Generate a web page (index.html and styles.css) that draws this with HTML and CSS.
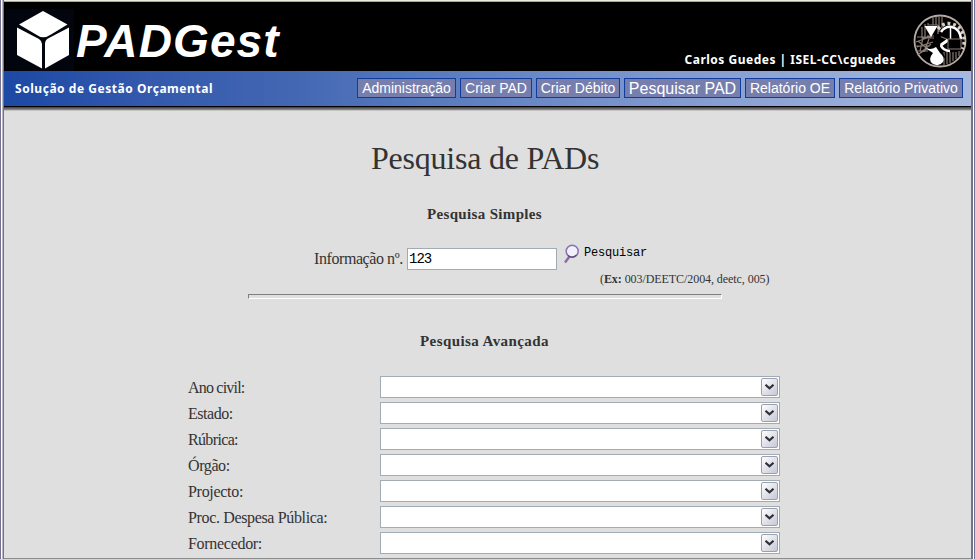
FILE: index.html
```html
<!DOCTYPE html>
<html lang="pt">
<head>
<meta charset="utf-8">
<title>PADGest</title>
<link rel="stylesheet" href="styles.css">
</head>
<body>
<div class="window">
  <header class="banner">
    <svg class="cube" width="68" height="62" viewBox="0 0 68 62">
      <rect width="68" height="62" fill="#02050d"/>
      <path fill="#fff" d="M37 2 61.500 15.500 45 25.500Q37 31 30 25.500L13 15.500ZM11 18.500 33 30Q36 32 36 35V59.500L11 46ZM63 18.500V46L39 59.500V35Q39 31 42 29.500Z"/>
    </svg>
    <span class="brand">PADGest</span>
    <span class="user">Carlos Guedes | ISEL-CC\cguedes</span>
    <svg class="seal" width="54" height="54" viewBox="0 0 54 54" fill="none">
      <circle cx="27" cy="27" r="25.500" stroke="#b5aaa2" stroke-width="1.800"/>
      <path stroke="#887a72" stroke-width="1.200" d="M20 4V11M23 3V11M26 3V18M29 3V14M12 10V24M9 13V24H22M15 9V11H25M25 11V22H14M4 23H18M3 28 19 22M4 33 20 28M7 39 18 30M5 27 16 36M10 24 7 37M16 25 11 38M2 32H17M3 37H15M4 41 14 35M26 22 36 26M31 38V51M34 38V50M37 38V49M40 38V47M43 38V45M46 37V42"/>
      <path stroke="#fff" stroke-width="2.500" d="M28 18Q32 12 39 13Q47 15 48 25M27 30Q30 37 37 37"/>
      <path stroke="#d8cec5" stroke-width="3.500" stroke-dasharray="2.800 2.800" d="M25 15Q31 8 39 10T50 20T49 35"/>
      <path stroke="#fff" stroke-width="1.500" d="M37.500 13V25"/>
      <path stroke="#fff" stroke-width="3" d="M28 31 35 26"/>
      <path fill="#000" stroke="#887a72" d="M35 25H48V35H35Z"/>
      <path fill="#000" d="M21 20H28L27 33 33 45 21 36Z"/>
      <path fill="#fff" d="M11.500 12H24.500L18 23ZM11 33Q17 37 23 33L27 39Q32 43 30 48Q26 53 20 50Q14 46 20 39Z"/>
    </svg>
  </header>
  <nav class="bar">
    <span class="slogan">Solução de Gestão Orçamental</span>
    <div class="menu">
      <a class="item w-adm">Administração</a>
      <a class="item w-pad">Criar PAD</a>
      <a class="item w-deb">Criar Débito</a>
      <a class="item w-search">Pesquisar PAD</a>
      <a class="item w-oe">Relatório OE</a>
      <a class="item w-priv">Relatório Privativo</a>
    </div>
  </nav>
  <div class="shadow"></div>
  <main class="content">
    <h1>Pesquisa de PADs</h1>
    <h2 class="simple-title">Pesquisa Simples</h2>
    <div class="search">
      <label class="info" for="info">Informação nº.</label>
      <input id="info" class="field" value="123">
      <svg class="lens" width="18" height="21" viewBox="0 0 18 21" fill="none">
        <path d="M5.500 12.500 1 18.500" stroke="#8a6aa6" stroke-width="2.400"/>
        <circle cx="8.200" cy="7.300" r="6" fill="#f0effa" stroke="#8971ad" stroke-width="1.500"/>
        <path d="M4 11.500Q8 15 12.500 11" stroke="#5e477d" stroke-width="1.200"/>
      </svg>
      <span class="go">Pesquisar</span>
    </div>
    <p class="hint">(<b>Ex:</b> 003/DEETC/2004, deetc, 005)</p>
    <div class="rule"></div>
    <h2 class="adv-title">Pesquisa Avançada</h2>
    <div class="filters">
      <div class="row"><span class="l1">Ano civil:</span><div class="select"><i class="drop"><svg width="9" height="6" viewBox="0 0 9 6"><path d="M.5 .8 4.500 4.300 8.500 .8"/></svg></i></div></div>
      <div class="row"><span class="l2">Estado:</span><div class="select"><i class="drop"><svg width="9" height="6" viewBox="0 0 9 6"><path d="M.5 .8 4.500 4.300 8.500 .8"/></svg></i></div></div>
      <div class="row"><span class="l3">Rúbrica:</span><div class="select"><i class="drop"><svg width="9" height="6" viewBox="0 0 9 6"><path d="M.5 .8 4.500 4.300 8.500 .8"/></svg></i></div></div>
      <div class="row"><span class="l4">Órgão:</span><div class="select"><i class="drop"><svg width="9" height="6" viewBox="0 0 9 6"><path d="M.5 .8 4.500 4.300 8.500 .8"/></svg></i></div></div>
      <div class="row"><span class="l5">Projecto:</span><div class="select"><i class="drop"><svg width="9" height="6" viewBox="0 0 9 6"><path d="M.5 .8 4.500 4.300 8.500 .8"/></svg></i></div></div>
      <div class="row"><span class="l6">Proc. Despesa Pública:</span><div class="select"><i class="drop"><svg width="9" height="6" viewBox="0 0 9 6"><path d="M.5 .8 4.500 4.300 8.500 .8"/></svg></i></div></div>
      <div class="row"><span class="l7">Fornecedor:</span><div class="select"><i class="drop"><svg width="9" height="6" viewBox="0 0 9 6"><path d="M.5 .8 4.500 4.300 8.500 .8"/></svg></i></div></div>
    </div>
  </main>
</div>
</body>
</html>
```
FILE: styles.css
```css
* { box-sizing: border-box; }
body {
  margin: 0;
  height: 559px;
  overflow: hidden;
  background: linear-gradient(90deg, #737391 0 1px, #fff 1px 2px, #b9b6c5 2px 3px, #737391 3px 4px, #dfdfdf 4px 971px, #737391 971px 973px, #fff 973px 974px, #737391 974px);
}
.window {
  width: 967px;
  height: 559px;
  margin-left: 4px;
  border-top: 1px solid #eceadb;
  border-bottom: 1px solid #8b8b8b;
  overflow: hidden;
  background: #dfdfdf;
  color: #333;
  font-family: "Liberation Serif", serif;
}
.banner {
  height: 70px;
  border-top: 1px solid #aaa89e;
  background: #000;
  display: flex;
  align-items: flex-start;
  color: #fff;
}
.cube { margin: 7px 0 0 2px; flex: none; }
.brand {
  margin: 12px 0 0 2px;
  width: 206px;
  font: italic bold 46px/54px "Liberation Sans", sans-serif;
  letter-spacing: 1.1px;
  white-space: nowrap;
}
.user {
  margin: 49px 0 0 auto;
  font: bold 12px/17px "Noto Sans", sans-serif;
  letter-spacing: .5px;
  white-space: nowrap;
}
.seal { margin: 12px 4px 0 17px; flex: none; }
.bar {
  height: 35px;
  background: linear-gradient(90deg, #1c49a4, #3459ad 15%, #4467b3 30%, #5478bd 42%, #829bd0 70%, #a7b9de);
  display: flex;
  justify-content: space-between;
}
.slogan {
  margin: 9px 0 0 11px;
  color: #fff;
  font: bold 12px/17px "Noto Sans", sans-serif;
  letter-spacing: .54px;
}
.menu { display: flex; gap: 4px; margin: 7px 8px 0 0; }
.item {
  height: 20px;
  border: 1px solid #123c9b;
  background: #767eae;
  color: #fff;
  font: 14px/19px "Liberation Sans", sans-serif;
  text-align: center;
  white-space: nowrap;
}
.w-adm { width: 99px; }
.w-pad { width: 72px; }
.w-deb { width: 84px; }
.w-search { width: 117px; font-size: 16px; line-height: 20px; }
.w-oe { width: 90px; }
.w-priv { width: 124px; }
.shadow {
  height: 5px;
  background: linear-gradient(#000 0 1px, #4b4b4b 1px 2px, #686868 2px 3px, #858585 3px 4px, #c3c3c3 4px);
}
h1, h2, p { margin: 0; white-space: nowrap; }
h1 {
  margin: 28px 0 0 367px;
  font-size: 32px;
  line-height: 38px;
  font-weight: 400;
  letter-spacing: -.22px;
}
h2 { font-size: 15px; line-height: 20px; }
.simple-title { margin: 27px 0 0 423px; letter-spacing: .34px; }
.search { display: flex; margin: 20px 0 0 309px; height: 26px; }
.info { width: 94px; margin-top: 5px; padding-left: 1px; font-size: 16px; line-height: 20px; letter-spacing: -.42px; white-space: nowrap; }
.field {
  width: 150px;
  height: 22px;
  margin-top: 4px;
  border: 1px solid #a1abb4;
  padding: 0 1px 1px;
  background: #fff;
  color: #000;
  font: 14px "Liberation Mono", monospace;
  letter-spacing: -1px;
}
.lens { margin: 0 0 0 7px; }
.go { margin: 0 0 0 2px; color: #000; font: 12px/18px "Liberation Mono", monospace; letter-spacing: -.2px; }
.hint { margin: 1px 0 0 596px; font-size: 12px; line-height: 16px; letter-spacing: -.07px; }
.rule {
  width: 474px;
  height: 5px;
  margin: 7px 0 0 244px;
  border: 1px solid;
  border-color: #7f7f7f #fff #fff #7f7f7f;
}
.adv-title { margin: 32px 0 0 416px; letter-spacing: .42px; }
.filters { display: grid; gap: 4px; margin: 25px 0 0 184px; width: 592px; }
.row { display: flex; justify-content: space-between; height: 22px; font-size: 16px; line-height: 24px; white-space: nowrap; }
.l1 { letter-spacing: -.8px; }
.l2 { letter-spacing: -.45px; }
.l3 { letter-spacing: -.65px; }
.l4 { letter-spacing: -.4px; }
.l5, .l7 { letter-spacing: -.3px; }
.l6 { letter-spacing: -.35px; }
.select { width: 400px; border: 1px solid #a1abb4; background: #fff; display: flex; justify-content: flex-end; padding: 1px; }
.drop {
  width: 17px;
  height: 18px;
  border: 1px solid #9aa0ad;
  border-radius: 2px;
  background: linear-gradient(135deg, #fff, #c5c7d6);
  display: grid;
  place-items: center;
}
.drop path { fill: none; stroke: #303038; stroke-width: 2.2; }
```
